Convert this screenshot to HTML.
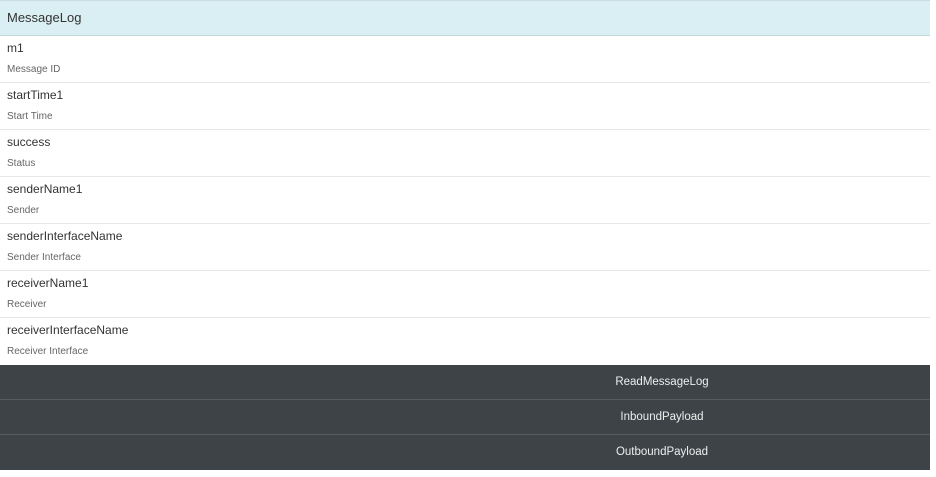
<!DOCTYPE html><html><head><style>
body{margin:0;background:#fff;font-family:"Liberation Sans",sans-serif;width:936px;height:477px;overflow:hidden}
.w{width:930px}
.h{height:34px;background:#daeff3;border-top:1px solid #c9dde2;border-bottom:1px solid #c4d8dd;font-size:13px;color:#333;line-height:34px;padding-left:7px}
.r{height:46px;border-bottom:1px solid #e6e6e6;padding-left:7px;position:relative}
.r .a{position:absolute;top:5px;font-size:12px;color:#333}
.r .b{position:absolute;top:28px;font-size:10px;color:#666}
.btn{height:34px;background:#3d4347;border-bottom:1px solid #555b5f;color:#eee;font-size:11.5px;line-height:34px;text-align:center;padding-left:394px;box-sizing:content-box;width:536px}
</style></head><body><div class="w">
<div class="h">MessageLog</div>
<div class="r"><div class="a">m1</div><div class="b">Message ID</div></div>
<div class="r"><div class="a">startTime1</div><div class="b">Start Time</div></div>
<div class="r"><div class="a">success</div><div class="b">Status</div></div>
<div class="r"><div class="a">senderName1</div><div class="b">Sender</div></div>
<div class="r"><div class="a">senderInterfaceName</div><div class="b">Sender Interface</div></div>
<div class="r"><div class="a">receiverName1</div><div class="b">Receiver</div></div>
<div class="r" style="border-bottom:none;height:47px"><div class="a">receiverInterfaceName</div><div class="b">Receiver Interface</div></div>
</div>
<div class="btn">ReadMessageLog</div>
<div class="btn">InboundPayload</div>
<div class="btn" style="border-bottom:none;height:35px">OutboundPayload</div>
</body></html>
